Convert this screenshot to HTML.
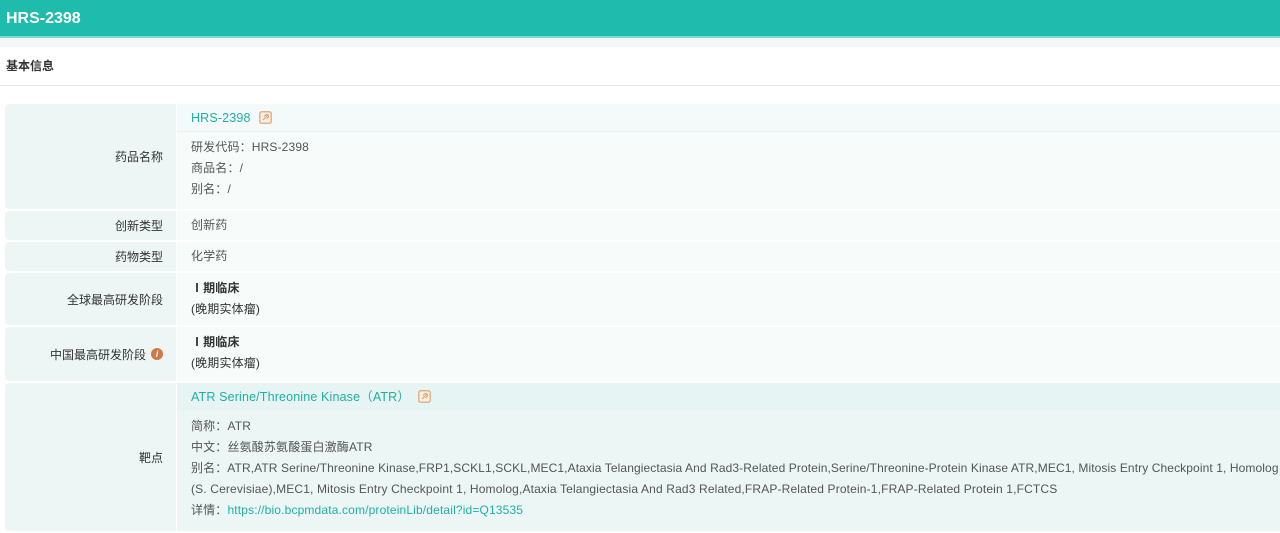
<!DOCTYPE html>
<html><head><meta charset="utf-8"><style>
*{margin:0;padding:0;box-sizing:border-box}
body{width:1280px;height:533px;overflow:hidden;background:#fff;font-family:"Liberation Sans","Noto Sans CJK SC",sans-serif;font-size:12px;color:#555}
.hd{height:38px;background:#1fbcad;color:#fff;font-weight:bold;font-size:16px;line-height:38px;padding-left:6px;border-bottom:2px solid #7fd8cf}
.strip{height:9px;background:#f4f6f7}
.sec{height:39px;line-height:39px;padding-left:6px;font-weight:bold;color:#333;border-bottom:1px solid #e6e6e6}
.tbl{position:absolute;left:5px;right:0;top:104px}
.row{display:flex;margin-bottom:2px}
.lab{width:171px;flex-shrink:0;background:#eef5f5;text-align:right;padding-right:13px;color:#333;display:flex;align-items:center;justify-content:flex-end;border-radius:4px 0 0 4px}
.val{flex:1;min-width:0;background:#f7fbfa;padding-left:14px;margin-left:1px;letter-spacing:0.15px}
.sub{height:28px;line-height:28px;color:#1fb0a3;font-size:12.5px;background:#f4f9f9;border-bottom:1px solid #eaf2f2;margin-left:-14px;padding-left:14px}
.ln{line-height:21px}
.lk{color:#1fb0a3}
.ic{display:inline-block;width:13px;height:13px;vertical-align:-2px;margin-left:8px}
.b{font-weight:bold;color:#333}
.i{display:inline-block;width:12px;height:12px;border-radius:50%;background:#d07848;color:#fff;font-size:9px;line-height:12px;text-align:center;font-style:italic;font-weight:bold;margin-left:5px}
</style></head><body>
<div class="hd">HRS-2398</div>
<div class="strip"></div>
<div class="sec">基本信息</div>
<div class="tbl">
<div class="row" style="height:105px"><div class="lab">药品名称</div><div class="val"><div class="sub">HRS-2398<svg class="ic" viewBox="0 0 13 13"><rect x="0.75" y="0.75" width="11.5" height="11.5" rx="2" fill="#fbeee2" stroke="#e0b48a" stroke-width="1.5"/><path d="M4 9l5-5M5 5.5l1.5-1.5a1.2 1.2 0 0 1 2.5 2.5L7.5 8" fill="none" stroke="#d9a06e" stroke-width="1"/></svg></div><div style="padding-top:5px"><div class="ln">研发代码：HRS-2398</div><div class="ln">商品名：/</div><div class="ln">别名：/</div></div></div></div>
<div class="row" style="height:29px"><div class="lab">创新类型</div><div class="val" style="line-height:29px">创新药</div></div>
<div class="row" style="height:29px"><div class="lab">药物类型</div><div class="val" style="line-height:29px">化学药</div></div>
<div class="row" style="height:52px"><div class="lab">全球最高研发阶段</div><div class="val" style="padding-top:5px"><div class="ln b">Ⅰ期临床</div><div class="ln" style="color:#333">(晚期实体瘤)</div></div></div>
<div class="row" style="height:54px"><div class="lab">中国最高研发阶段<span class="i">i</span></div><div class="val" style="padding-top:5px"><div class="ln b">Ⅰ期临床</div><div class="ln" style="color:#333">(晚期实体瘤)</div></div></div>
<div class="row" style="height:148px"><div class="lab">靶点</div><div class="val" style="background:#ebf6f5"><div class="sub" style="background:#e6f5f3">ATR Serine/Threonine Kinase（ATR）<svg class="ic" viewBox="0 0 13 13"><rect x="0.75" y="0.75" width="11.5" height="11.5" rx="2" fill="#fbeee2" stroke="#e0b48a" stroke-width="1.5"/><path d="M4 9l5-5M5 5.5l1.5-1.5a1.2 1.2 0 0 1 2.5 2.5L7.5 8" fill="none" stroke="#d9a06e" stroke-width="1"/></svg></div><div style="padding-top:5px"><div class="ln">简称：ATR</div><div class="ln">中文：丝氨酸苏氨酸蛋白激酶ATR</div><div class="ln" style="white-space:nowrap;overflow:hidden;letter-spacing:0.1px">别名：ATR,ATR Serine/Threonine Kinase,FRP1,SCKL1,SCKL,MEC1,Ataxia Telangiectasia And Rad3-Related Protein,Serine/Threonine-Protein Kinase ATR,MEC1, Mitosis Entry Checkpoint 1, Homolog</div><div class="ln">(S. Cerevisiae),MEC1, Mitosis Entry Checkpoint 1, Homolog,Ataxia Telangiectasia And Rad3 Related,FRAP-Related Protein-1,FRAP-Related Protein 1,FCTCS</div><div class="ln">详情：<span class="lk">https://bio.bcpmdata.com/proteinLib/detail?id=Q13535</span></div></div></div></div>
</div>
</body></html>
